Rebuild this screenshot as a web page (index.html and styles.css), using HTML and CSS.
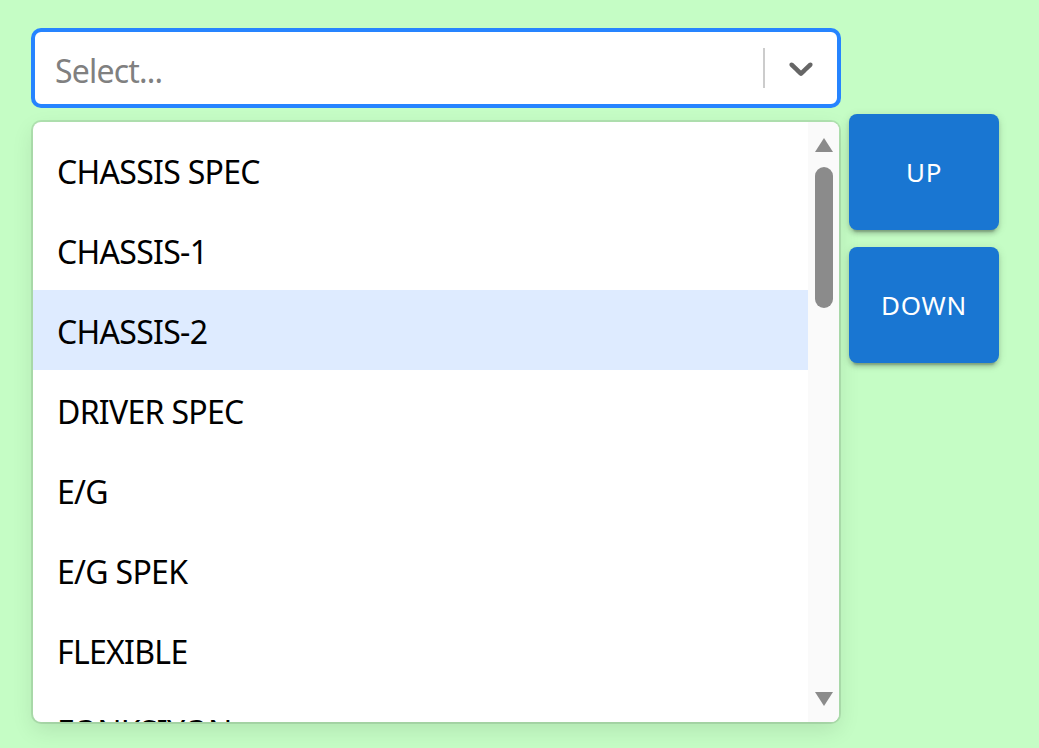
FILE: index.html
```html
<!DOCTYPE html>
<html>
<head>
<meta charset="utf-8">
<link rel="stylesheet" href="styles.css">
</head>
<body>
<div class="page">
  <div class="select">
    <div class="control">
      <div class="value">
        <div class="placeholder">Select...</div>
      </div>
      <div class="indicators">
        <span class="separator"></span>
        <div class="dropdown">
          <svg viewBox="0 0 20 20" width="40" height="40" aria-hidden="true"><path fill="#666" d="M4.516 7.548c0.436-0.446 1.043-0.481 1.576 0l3.908 3.747 3.908-3.747c0.533-0.481 1.141-0.446 1.574 0 0.436 0.445 0.408 1.197 0 1.615-0.406 0.418-4.695 4.502-4.695 4.502-0.217 0.223-0.502 0.335-0.787 0.335s-0.57-0.112-0.789-0.335c0 0-4.287-4.084-4.695-4.502s-0.436-1.17 0-1.615z"/></svg>
        </div>
      </div>
    </div>
    <div class="menu">
      <div class="list">
        <div class="option">CHASSIS SPEC</div>
        <div class="option">CHASSIS-1</div>
        <div class="option focused">CHASSIS-2</div>
        <div class="option">DRIVER SPEC</div>
        <div class="option">E/G</div>
        <div class="option">E/G SPEK</div>
        <div class="option">FLEXIBLE</div>
        <div class="option">FONKSIYON</div>
      </div>
      <div class="scrollbar">
        <span class="arrow up"></span>
        <div class="track"><span class="thumb"></span></div>
        <span class="arrow down"></span>
      </div>
    </div>
  </div>
  <div class="buttons">
    <button class="btn">UP</button>
    <button class="btn">DOWN</button>
  </div>
</div>
</body>
</html>
```
FILE: styles.css
```css
html, body {
  margin: 0;
  padding: 0;
  background: #c5fdc5;
  height: 100%;
}
body {
  font-family: "Noto Sans", "Open Sans", sans-serif;
  overflow: hidden;
}
.page {
  display: flex;
  gap: 10px;
  padding: 30px 0 0 33px;
}
.select {
  width: 806px;
  display: flex;
  flex-direction: column;
}
.control {
  box-sizing: border-box;
  height: 76px;
  background: #fff;
  border: 2px solid #2684ff;
  box-shadow: 0 0 0 2px #2684ff;
  border-radius: 8px;
  display: flex;
  align-items: center;
}
.value {
  flex: 1;
  padding: 7px 16px 1px;
}
.placeholder {
  margin: 0 4px;
  color: #808080;
  font-size: 32px;
  line-height: 40px;
  letter-spacing: -0.8px;
}
.indicators {
  display: flex;
  align-items: stretch;
  align-self: stretch;
}
.separator {
  width: 2px;
  background: #cccccc;
  margin: 16px 0;
}
.dropdown {
  padding: 16px;
  display: flex;
  align-items: center;
}
.dropdown svg { display: block; }
.menu {
  margin-top: 16px;
  height: 600px;
  background: #fff;
  border-radius: 8px;
  box-shadow: 0 0 0 2px rgba(0,0,0,0.1), 0 8px 22px rgba(0,0,0,0.1);
  display: flex;
  overflow: hidden;
}
.list {
  flex: 1;
  padding-top: 8px;
  overflow: hidden;
}
.option {
  height: 80px;
  box-sizing: border-box;
  padding: 2px 24px 0;
  display: flex;
  align-items: center;
  font-size: 32px;
  letter-spacing: -0.7px;
  color: #000;
}
.option.focused { background: #deebff; }
.scrollbar {
  width: 31px;
  background: #fafafa;
  display: flex;
  flex-direction: column;
  align-items: center;
  padding: 16px 0 16px 0;
  box-sizing: border-box;
}
.arrow {
  width: 0;
  height: 0;
  border-left: 9px solid transparent;
  border-right: 9px solid transparent;
}
.arrow.up { border-bottom: 14px solid #8b8b8b; }
.arrow.down { border-top: 14px solid #8b8b8b; }
.track {
  flex: 1;
  width: 18px;
  padding-top: 15px;
}
.thumb {
  display: block;
  width: 18px;
  height: 141px;
  border-radius: 9px;
  background: #8b8b8b;
}
.buttons {
  display: flex;
  flex-direction: column;
  gap: 17px;
  margin-top: 84px;
}
.btn {
  width: 150px;
  height: 116px;
  border: none;
  border-radius: 8px;
  background: #1976d2;
  color: #fff;
  font-family: "Noto Sans", "Open Sans", sans-serif;
  font-size: 26px;
  letter-spacing: 0.7px;
  box-shadow: 0 6px 2px -4px rgba(0,0,0,0.2), 0 4px 4px 0 rgba(0,0,0,0.14), 0 2px 10px 0 rgba(0,0,0,0.12);
  padding: 0;
}
```
